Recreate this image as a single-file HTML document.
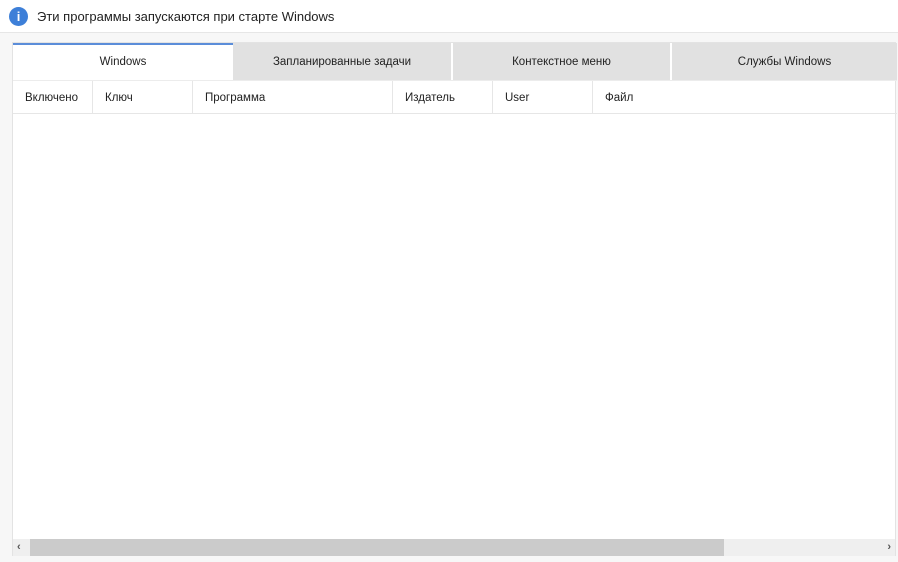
<!DOCTYPE html>
<html><head><meta charset="utf-8"><style>
*{margin:0;padding:0;box-sizing:border-box}
body{width:898px;height:562px;background:#f7f7f7;font-family:"Liberation Sans","DejaVu Sans",sans-serif;font-size:12px;color:#222;position:relative;overflow:hidden}
.top{position:absolute;left:0;top:0;width:898px;height:33px;background:#fff;border-bottom:1px solid #e6e6e6}
.ic{position:absolute;left:9px;top:7px;width:19px;height:19px;border-radius:50%;background:#3d7fd8;color:#fff;font-weight:bold;font-size:13px;text-align:center;line-height:19px;font-family:"Liberation Sans",sans-serif}
.tt{position:absolute;left:37px;top:9px;font-size:13px;color:#222}
.panel{position:absolute;left:12px;top:42px;width:884px;height:514px;background:#fff;border:1px solid #e3e3e3}
.tab{position:absolute;top:0;height:37px;background:#e1e1e1;text-align:center;line-height:39px;font-size:11.5px}
.hdr{position:absolute;left:0;top:37px;width:884px;height:34px;border-bottom:1px solid #e6e6e6;border-top:1px solid #ececec}
.c{position:absolute;top:0;height:33px;line-height:35px;padding-left:12px;border-right:1px solid #e6e6e6;font-size:11.5px}
.sb{position:absolute;left:0;top:496px;width:882px;height:17px;background:#efefef}
.th{position:absolute;left:17px;top:0;width:694px;height:17px;background:#cbcbcb}
.ar{position:absolute;top:0;font-size:11px;color:#555;line-height:17px;font-weight:bold}
</style></head><body>
<div class="top"><div class="ic">i</div><div class="tt">Эти программы запускаются при старте Windows</div></div>
<div class="panel">
<div class="tab" style="left:0;width:220px;background:#fff;border-top:2px solid #5b8dd9;line-height:35px">Windows</div>
<div class="tab" style="left:220px;width:218px">Запланированные задачи</div>
<div class="tab" style="left:439px;width:218px;border-left:1px solid #fff">Контекстное меню</div>
<div class="tab" style="left:658px;width:226px;border-left:1px solid #fff">Службы Windows</div>
<div class="hdr">
<div class="c" style="left:0;width:80px">Включено</div>
<div class="c" style="left:80px;width:100px">Ключ</div>
<div class="c" style="left:180px;width:200px">Программа</div>
<div class="c" style="left:380px;width:100px">Издатель</div>
<div class="c" style="left:480px;width:100px">User</div>
<div class="c" style="left:580px;width:100px;border-right:none">Файл</div>
</div>
<div class="sb"><div class="ar" style="left:4px">‹</div><div class="th"></div><div class="ar" style="right:4px">›</div></div>
</div>
</body></html>
